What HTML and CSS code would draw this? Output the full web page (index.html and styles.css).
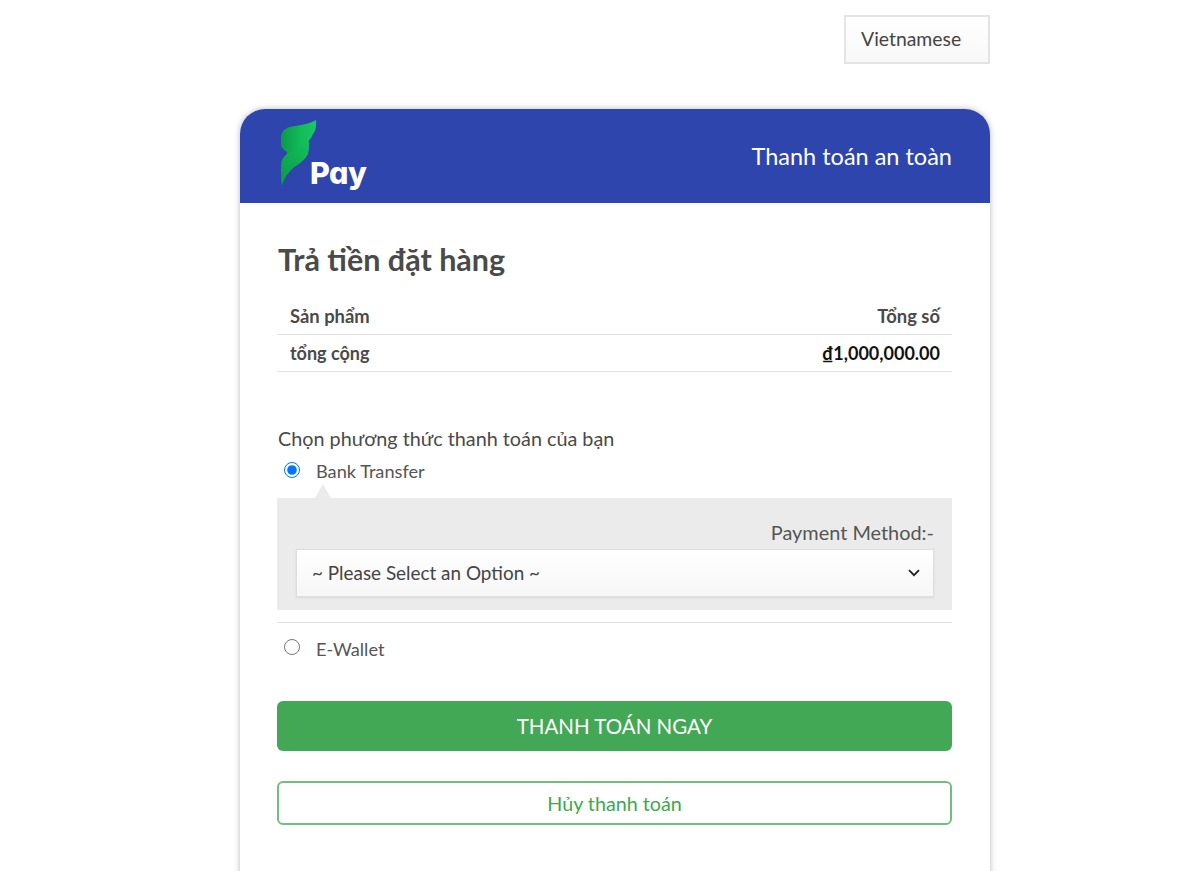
FILE: index.html
```html
<!DOCTYPE html>
<html lang="vi">
<head>
    <meta charset="UTF-8">
    <meta name="viewport" content="width=device-width, initial-scale=1.0">
    <title>Thanh toán an toàn</title>
    <link rel="stylesheet" href="styles.css">
</head>
<body>
    <div class="page">
        <div class="lang-row">
            <button class="lang-btn">Vietnamese</button>
        </div>
        <div class="card">
            <div class="card-header">
                <div class="logo">
                    <svg class="logo-mark" viewBox="0 0 38 68" width="38" height="68">
                        <defs>
                            <linearGradient id="leaf" x1="0" y1="0" x2="1" y2="0">
                                <stop offset="0" stop-color="#0a9a48"/>
                                <stop offset="0.55" stop-color="#12bb58"/>
                                <stop offset="1" stop-color="#1ac862"/>
                            </linearGradient>
                            <linearGradient id="fold" x1="0" y1="1" x2="1" y2="0">
                                <stop offset="0" stop-color="#0a9a48"/>
                                <stop offset="1" stop-color="#16c05c"/>
                            </linearGradient>
                        </defs>
                        <path fill="url(#leaf)" d="M36 1C36.5 6 36 12 33 15C32 18 30 20 28.5 22C29 25 29 30 28 34C26 40 20 44 14 48C8 53 4 59 2 66C1 60 1 53 1 47C1 42 3 38 7 35L7 33C5 32 3 30 1 27L1 17C2 12 5 9 10 8C20 6 30 5 36 1Z"/>
                        <path fill="url(#fold)" d="M28.5 22C29 25 29 30 28 34C26 40 20 44 14 48C8 53 4 59 2 66C1 60 1 53 1 47C1 42 3 38 7 35C15 31 23 28 28.5 22Z"/>
                    </svg>
                    <span class="logo-text">Pay</span>
                </div>
                <div class="secure-text">Thanh toán an toàn</div>
            </div>
            <div class="card-body">
                <h1 class="title">Trả tiền đặt hàng</h1>
                <table class="order-table">
                    <tr>
                        <th>Sản phẩm</th>
                        <th class="right">Tổng số</th>
                    </tr>
                    <tr>
                        <th>tổng cộng</th>
                        <th class="right amount">₫1,000,000.00</th>
                    </tr>
                </table>

                <div class="choose-label">Chọn phương thức thanh toán của bạn</div>

                <label class="method method-first">
                    <input type="radio" name="method" checked>
                    <span>Bank Transfer</span>
                </label>
                <div class="method-panel">
                    <div class="panel-label">Payment Method:-</div>
                    <div class="select-wrap">
                        <select class="method-select">
                            <option>~ Please Select an Option ~</option>
                        </select>
                        <svg class="chevron" viewBox="0 0 12 8" width="12" height="8">
                            <path d="M1 1.2L6 6.2L11 1.2" fill="none" stroke="#222" stroke-width="1.8"/>
                        </svg>
                    </div>
                </div>
                <div class="divider"></div>
                <label class="method method-second">
                    <input type="radio" name="method">
                    <span>E-Wallet</span>
                </label>

                <button class="btn-pay">THANH TOÁN NGAY</button>
                <button class="btn-cancel">Hủy thanh toán</button>
            </div>
        </div>
    </div>
</body>
</html>
```

FILE: styles.css
```css
* {
    margin: 0;
    padding: 0;
    box-sizing: border-box;
    font-family: Lato, "Noto Sans", sans-serif;
}

html, body {
    height: 100%;
    overflow: hidden;
    background-color: #fff;
}

.page {
    width: 750px;
    margin-left: 240px;
}

.lang-row {
    display: flex;
    justify-content: flex-end;
    padding-top: 15px;
    height: 109px;
}

.lang-btn {
    width: 146px;
    height: 49px;
    background: linear-gradient(#fff, #f8f8f8);
    border: 2px solid #e4e4e4;
    color: #444;
    font-size: 19.4px;
    text-align: left;
    padding: 0 0 2px 15px;
}

.card {
    height: 900px;
    border-radius: 25px 25px 0 0;
    box-shadow: 0 0 6px rgba(0, 0, 0, 0.28);
    background-color: #fff;
}

.card-header {
    height: 94px;
    background-color: #2e45ae;
    border-radius: 25px 25px 0 0;
    display: flex;
    justify-content: space-between;
    align-items: center;
    padding: 0 38px 0 40px;
}

.logo {
    position: relative;
    width: 90px;
    height: 94px;
}

.logo-mark {
    position: absolute;
    left: 0;
    top: 10px;
}

.logo-text {
    position: absolute;
    left: 30px;
    top: 45px;
    color: #fff;
    font-family: Inter, sans-serif;
    font-feature-settings: "cv11";
    font-weight: 800;
    font-size: 30.5px;
    letter-spacing: -0.5px;
}

.secure-text {
    color: #fff;
    font-size: 23.5px;
}

.card-body {
    padding: 35px 38px 0 37px;
}

.title {
    font-size: 30.5px;
    line-height: 42px;
    font-weight: 700;
    color: #4a4a4a;
    padding-left: 1px;
}

.order-table {
    width: 100%;
    border-collapse: collapse;
    margin-top: 17px;
}

.order-table th {
    height: 37px;
    padding: 0 12px 0 13px;
    font-size: 18px;
    font-weight: 700;
    text-align: left;
    color: #4a4a4a;
    border-bottom: 1px solid #e2e2e2;
}

.order-table tr:first-child th {
    padding-top: 2px;
    font-size: 18.4px;
}

.order-table th.right {
    text-align: right;
}

.order-table th.amount {
    color: #111;
}

.choose-label {
    margin-top: 53px;
    padding-left: 1px;
    font-size: 19.8px;
    line-height: 26px;
    color: #4a4a4a;
}

.method {
    display: flex;
    align-items: center;
    gap: 16px;
    padding-left: 7px;
    height: 32px;
    font-size: 18.2px;
    color: #555;
}

.method span {
    padding-top: 2px;
}

.method input {
    width: 16px;
    height: 16px;
}

.method-first {
    margin-top: 3px;
}

.method-panel {
    position: relative;
    margin-top: 12px;
    height: 112px;
    padding: 22px 18px 0 19px;
    background-color: #ebebeb;
}

.method-panel::before {
    content: "";
    position: absolute;
    left: 38px;
    top: -14px;
    border-left: 8px solid transparent;
    border-right: 8px solid transparent;
    border-bottom: 14px solid #ebebeb;
}

.panel-label {
    text-align: right;
    font-size: 19.9px;
    line-height: 24px;
    color: #555;
}

.select-wrap {
    position: relative;
    margin-top: 5px;
}

.method-select {
    appearance: none;
    width: 100%;
    height: 48px;
    padding-left: 15px;
    border: 1px solid #ddd;
    border-radius: 0;
    background: linear-gradient(#fff, #f6f6f6);
    box-shadow: 0 1px 2px rgba(0, 0, 0, 0.08);
    font-size: 18.9px;
    color: #444;
}

.chevron {
    position: absolute;
    right: 14px;
    top: 20px;
}

.divider {
    margin-top: 12px;
    border-top: 1px solid #e2e2e2;
}

.method-second {
    margin-top: 8px;
}

.method-second span {
    padding-top: 4px;
}

.btn-pay {
    display: block;
    width: 100%;
    height: 50px;
    margin-top: 38px;
    padding-top: 1px;
    border: 0;
    border-radius: 6px;
    background-color: #43a855;
    color: #fff;
    font-size: 20.5px;
}

.btn-cancel {
    display: block;
    width: 100%;
    height: 44px;
    margin-top: 30px;
    padding-top: 2px;
    border: 2px solid #72be80;
    border-radius: 6px;
    background-color: #fff;
    color: #3da751;
    font-size: 19.7px;
}
```
